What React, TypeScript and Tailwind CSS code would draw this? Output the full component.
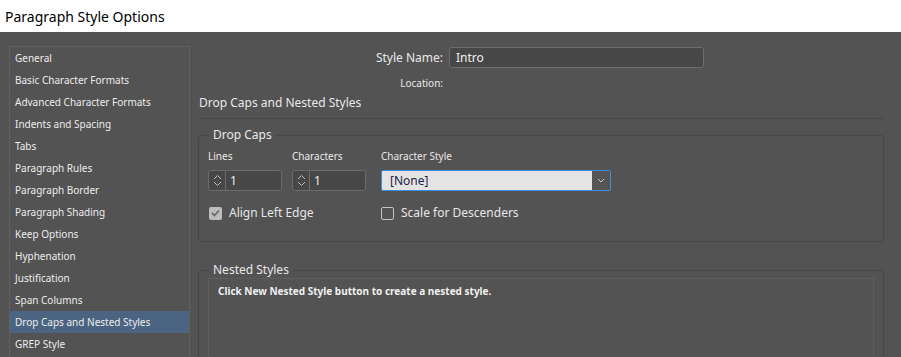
import React from "react";

const items = [
  "General",
  "Basic Character Formats",
  "Advanced Character Formats",
  "Indents and Spacing",
  "Tabs",
  "Paragraph Rules",
  "Paragraph Border",
  "Paragraph Shading",
  "Keep Options",
  "Hyphenation",
  "Justification",
  "Span Columns",
  "Drop Caps and Nested Styles",
  "GREP Style",
];

function Spinner({ value }: { value: string }) {
  return (
    <div className="flex h-[21px] w-[74px] rounded-[3px] border border-[#6b6b6b] bg-[#474747]">
      <div className="flex w-[17px] flex-col items-center justify-center gap-[1px] border-r border-[#6b6b6b]">
        <svg width="9" height="6" viewBox="0 0 9 6">
          <path d="M1 5 L4.5 1.5 L8 5" fill="none" stroke="#bdbdbd" strokeWidth="1" />
        </svg>
        <svg width="9" height="6" viewBox="0 0 9 6">
          <path d="M1 1 L4.5 4.5 L8 1" fill="none" stroke="#bdbdbd" strokeWidth="1" />
        </svg>
      </div>
      <div className="flex items-center pl-[4px] text-[12px] text-[#f0f0f0]">{value}</div>
    </div>
  );
}

function Checkbox({ checked, label }: { checked: boolean; label: string }) {
  return (
    <div className="flex items-center gap-[7px]">
      {checked ? (
        <div className="flex h-[13px] w-[13px] items-center justify-center rounded-[2px] bg-[#bcbcbc]">
          <svg width="9" height="8" viewBox="0 0 9 8">
            <path d="M1 4 L3.5 6.5 L8 1.5" fill="none" stroke="#6a6a6a" strokeWidth="1.8" />
          </svg>
        </div>
      ) : (
        <div className="h-[13px] w-[13px] rounded-[2px] border border-[#c4c4c4]" />
      )}
      <span className="text-[12px] text-[#e6e6e6]">{label}</span>
    </div>
  );
}

export default function App() {
  return (
    <div
      className="flex h-[357px] w-[901px] flex-col overflow-hidden bg-[#535353]"
      style={{ fontFamily: '"Noto Sans", "Open Sans", sans-serif' }}
    >
      <div className="flex h-[32px] shrink-0 items-center bg-white pl-[5px] text-[14px] text-black">
        Paragraph Style Options
      </div>
      <div className="flex flex-1">
        <div className="ml-[9px] mt-[14px] w-[181px] shrink-0 border border-[#616161]">
          {items.map((it, i) => (
            <div
              key={it}
              className={
                "flex h-[22px] items-center pl-[5px] text-[10px] text-[#ececec] " +
                (i === 12 ? "bg-[#4b6482]" : "")
              }
            >
              {it}
            </div>
          ))}
        </div>
        <div className="ml-[8px] flex w-[686px] flex-col">
          <div className="mt-[15px] flex h-[21px] items-center">
            <div className="w-[245px] text-right text-[12px] text-[#e8e8e8]">Style Name:</div>
            <div className="ml-[6px] flex h-[21px] w-[255px] items-center rounded-[3px] border border-[#6e6e6e] bg-[#474747] pl-[6px] text-[12px] text-[#f0f0f0]">
              Intro
            </div>
          </div>
          <div className="mt-[8px] flex h-[14px] items-center">
            <div className="w-[245px] text-right text-[10px] text-[#e8e8e8]">Location:</div>
          </div>
          <div className="mt-[5px] flex h-[16px] items-center pl-[1px] text-[12px] text-[#e8e8e8]">
            Drop Caps and Nested Styles
          </div>
          <div className="mt-[7px] h-[1px] w-[686px] bg-[#474747]" />
          <fieldset className="mt-[8px] h-[115px] w-[686px] rounded-[3px] border border-[#474747] pl-[9px]">
            <legend className="ml-[1px] px-[4px] text-[12px] leading-[16px] text-[#e8e8e8]">Drop Caps</legend>
            <div className="mt-[6px] flex">
              <div className="flex w-[84px] flex-col">
                <span className="h-[14px] text-[10px] leading-[14px] text-[#e8e8e8]">Lines</span>
                <div className="mt-[7px]">
                  <Spinner value="1" />
                </div>
              </div>
              <div className="flex w-[89px] flex-col">
                <span className="h-[14px] text-[10px] leading-[14px] text-[#e8e8e8]">Characters</span>
                <div className="mt-[7px]">
                  <Spinner value="1" />
                </div>
              </div>
              <div className="flex flex-col">
                <span className="h-[14px] text-[10px] leading-[14px] text-[#e8e8e8]">Character Style</span>
                <div className="mt-[7px] flex h-[21px] w-[230px] rounded-[2px] border border-[#3d8ee0] bg-[#e4e4e4]">
                  <div className="flex flex-1 items-center pl-[8px] text-[12px] text-[#221f45]">[None]</div>
                  <div className="flex w-[18px] items-center justify-center bg-[#555555]">
                    <svg width="8" height="5" viewBox="0 0 8 5">
                      <path d="M1 1 L4 4 L7 1" fill="none" stroke="#c8c8c8" strokeWidth="1" />
                    </svg>
                  </div>
                </div>
              </div>
            </div>
            <div className="mt-[13px] flex">
              <div className="w-[173px] pl-[1px]">
                <Checkbox checked label="Align Left Edge" />
              </div>
              <Checkbox checked={false} label="Scale for Descenders" />
            </div>
          </fieldset>
          <fieldset className="mt-[20px] h-[200px] w-[686px] rounded-[3px] border border-[#474747] px-[9px]">
            <legend className="ml-[1px] px-[4px] text-[12px] leading-[16px] text-[#e8e8e8]">Nested Styles</legend>
            <div className="mt-[0px] h-[150px] border border-[#5e5e5e] pl-[9px] pt-[5px] text-[10px] font-bold text-[#f0f0f0]">
              Click New Nested Style button to create a nested style.
            </div>
          </fieldset>
        </div>
      </div>
    </div>
  );
}
